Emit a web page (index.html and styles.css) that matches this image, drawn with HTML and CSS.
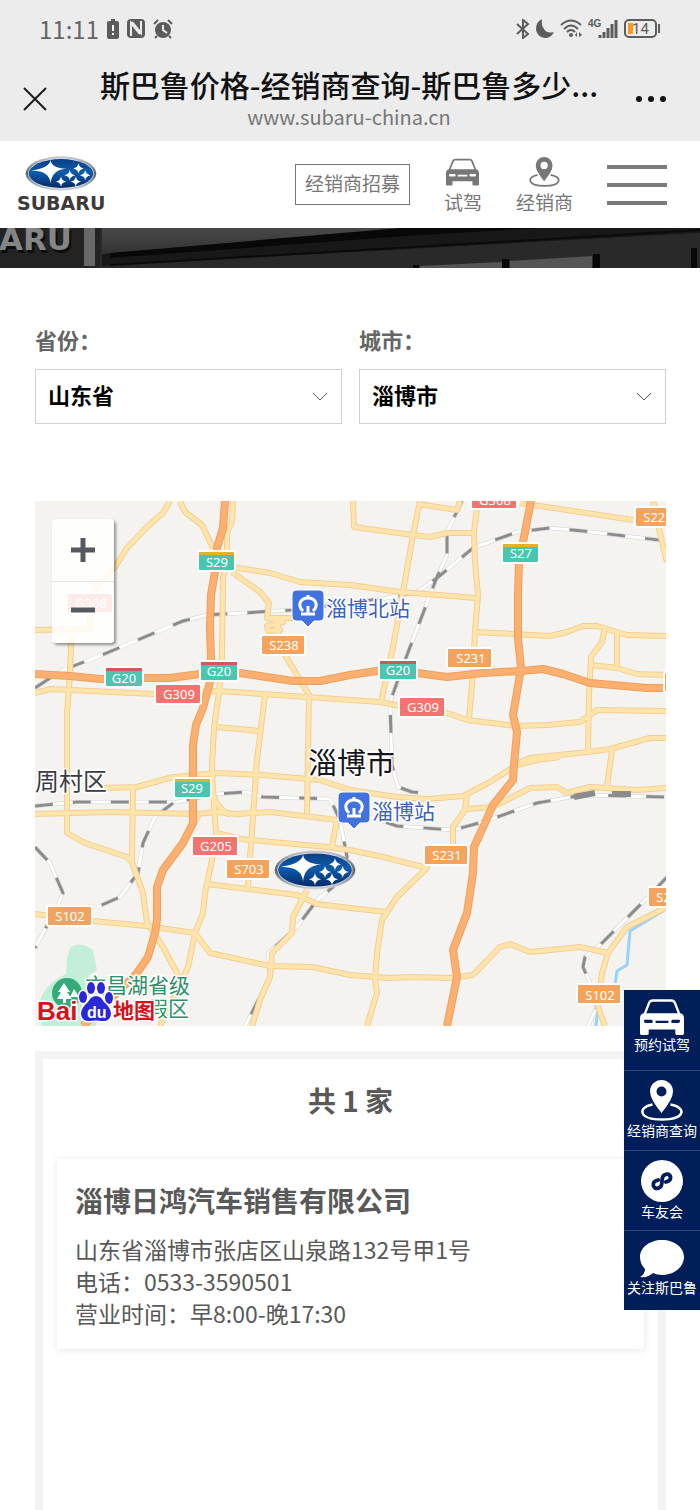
FILE: index.html
```html
<!DOCTYPE html>
<html lang="zh-CN">
<head>
  <meta charset="UTF-8">
  <title>斯巴鲁价格-经销商查询</title>
  <meta name="viewport" content="width=device-width, initial-scale=1.0">
  <link rel="stylesheet" href="styles.css">
</head>
<body>

  <!-- Shared shapes -->
  <svg class="defs" aria-hidden="true">
    <defs>
      <linearGradient id="blue" x1="0" y1="0" x2="0" y2="1">
        <stop offset="0" stop-color="#0a3f86"/>
        <stop offset="0.45" stop-color="#0d5cad"/>
        <stop offset="1" stop-color="#062a66"/>
      </linearGradient>
      <linearGradient id="silver" x1="0" y1="0" x2="0" y2="1">
        <stop offset="0" stop-color="#c9ccd0"/>
        <stop offset="0.5" stop-color="#5d6269"/>
        <stop offset="1" stop-color="#d5d8db"/>
      </linearGradient>
      <symbol id="star" viewBox="-20 -20 40 40">
        <path d="M0-20Q2-3 20 0Q2 3 0 20Q-2 3-20 0Q-2-3 0-20Z" fill="#fff"/>
      </symbol>
      <symbol id="badge" viewBox="0 0 212 104">
        <ellipse cx="106" cy="52" rx="105" ry="51" fill="url(#silver)"/>
        <ellipse cx="106" cy="52" rx="98" ry="45" fill="#dfe3e8"/>
        <ellipse cx="106" cy="52" rx="96" ry="43" fill="url(#blue)"/>
        <path d="M75 12Q77 36 122 38Q78 41 75 82Q72 42 16 44Q72 36 75 12Z" fill="#fff"/>
        <use href="#star" x="142" y="21" width="32" height="32"/>
        <use href="#star" x="116" y="41" width="32" height="32"/>
        <use href="#star" x="162" y="41" width="32" height="32"/>
        <use href="#star" x="90" y="60" width="32" height="32"/>
        <use href="#star" x="134" y="60" width="32" height="32"/>
      </symbol>
      <symbol id="car" viewBox="0 0 96 78">
        <path d="M9 36L20 8Q22 3 28 3H68Q74 3 76 8L87 36" fill="none" stroke="currentColor" stroke-width="5"/>
        <path fill-rule="evenodd" fill="currentColor" d="M0 42Q0 31 11 31H85Q96 31 96 42V75Q96 78 93 78H80Q77 78 77 75V66H19V75Q19 78 16 78H3Q0 78 0 75ZM9 45V49Q9 52 12 52H25Q29 52 28 48L26 45ZM34 47V52H62V47ZM87 45H70L68 48Q67 52 71 52H84Q87 52 87 49Z"/>
      </symbol>
      <symbol id="pin" viewBox="0 0 88 82">
        <path fill-rule="evenodd" fill="currentColor" d="M43 0A23 23 0 0 1 66 23Q66 38 43 66Q20 38 20 23A23 23 0 0 1 43 0ZM43 13A10 10 0 1 0 43 33A10 10 0 1 0 43 13Z"/>
        <path d="M25 49C-6 55-3 79 44 79S94 55 61 49" fill="none" stroke="currentColor" stroke-width="5"/>
      </symbol>
      <symbol id="station" viewBox="0 0 34 40">
        <path d="M6 1H28Q33 1 33 6V27Q33 32 28 32H23L17 38L11 32H6Q1 32 1 27V6Q1 1 6 1Z" fill="#4272dd" stroke="#fff"/>
        <path d="M12 22Q8 18 9 14Q11 9 17 9T25 14Q26 18 22 22M10 25H24M17 17V24M17 9V6" fill="none" stroke="#fff" stroke-width="3"/>
      </symbol>
    </defs>
  </svg>

  <header class="browser">
    <div class="status">
      <div class="status-side">
        <span class="clock">11:11</span>
        <svg width="12" height="20" viewBox="0 0 12 20"><path d="M4 0H8V2H10Q12 2 12 4V18Q12 20 10 20H2Q0 20 0 18V4Q0 2 2 2H4Z" fill="#5c5c5c"/><path d="M6 6V12M6 14V16" stroke="#fff" stroke-width="2"/></svg>
        <svg width="18" height="19" viewBox="0 0 18 19"><rect width="18" height="19" rx="4" fill="#5c5c5c"/><path d="M4 17V4L13 15M5 3L14 14V2" fill="none" stroke="#ececec" stroke-width="2"/></svg>
        <svg width="20" height="20" viewBox="0 0 20 20"><circle cx="10" cy="11" r="8" fill="#5c5c5c"/><path d="M1 5L5 1M15 1L19 5M4 17L2 19M16 17L18 19" stroke="#5c5c5c" stroke-width="2"/><path d="M10 6V11L14 14" fill="none" stroke="#ececec" stroke-width="2"/></svg>
      </div>
      <div class="status-side right">
        <svg width="14" height="20" viewBox="0 0 14 20"><path d="M1 5L12 15L7 19V1L12 5L1 15" fill="none" stroke="#5c5c5c" stroke-width="2"/></svg>
        <svg width="18" height="19" viewBox="0 0 18 19"><path d="M6 0Q0 3 0 10A9 9 0 0 0 9 19Q15 19 18 13Q11 15 8 10Q5 6 6 0Z" fill="#5c5c5c"/></svg>
        <svg width="22" height="19" viewBox="0 0 22 19"><path d="M1 6Q11-3 21 6M4 10Q11 3 18 10M7 13Q11 9 15 13" fill="none" stroke="#5c5c5c" stroke-width="2"/><circle cx="11" cy="16" r="2" fill="#5c5c5c"/><path d="M17 13L15 16L17 18ZM19 13L22 16L19 18Z" fill="#5c5c5c"/></svg>
        <svg width="30" height="20" viewBox="0 0 30 20"><text class="net" x="0" y="8">4G</text><path d="M12 19V16M16 19V13M20 19V9M24 19V5M28 19V1" stroke="#5c5c5c" stroke-width="3"/></svg>
        <svg width="37" height="20" viewBox="0 0 37 20"><rect x="1" y="1" width="31" height="17" rx="4" fill="none" stroke="#5c5c5c" stroke-width="2"/><path d="M4 4H9V15H4Z" fill="#f7981f"/><path d="M35 5V14" stroke="#5c5c5c" stroke-width="2"/><text class="charge" x="8" y="15">14</text></svg>
      </div>
    </div>
    <div class="titlebar">
      <button class="icon-btn" type="button" aria-label="关闭">
        <svg width="26" height="26" viewBox="0 0 26 26"><path d="M2 2L24 24M24 2L2 24" stroke="#1c1c1c" stroke-width="2"/></svg>
      </button>
      <div class="titles">
        <h1>斯巴鲁价格-经销商查询-斯巴鲁多少...</h1>
        <p>www.subaru-china.cn</p>
      </div>
      <button class="icon-btn" type="button" aria-label="更多">
        <svg width="32" height="8" viewBox="0 0 32 8"><g fill="#111"><circle cx="4" cy="4" r="3"/><circle cx="16" cy="4" r="3"/><circle cx="28" cy="4" r="3"/></g></svg>
      </button>
    </div>
  </header>

  <nav class="site-nav">
    <a class="logo" href="#">
      <svg width="72" height="35"><use href="#badge"/></svg>
      <span>SUBARU</span>
    </a>
    <a class="join" href="#">经销商招募</a>
    <a class="nav-item" href="#"><svg width="33" height="30"><use href="#car"/></svg>试驾</a>
    <a class="nav-item" href="#"><svg width="33" height="30"><use href="#pin"/></svg>经销商</a>
    <button class="menu" type="button" aria-label="菜单"><i></i><i></i><i></i></button>
  </nav>

  <div class="banner">
    <svg viewBox="0 0 700 40" preserveAspectRatio="xMinYMid slice">
      <defs>
        <linearGradient id="roof" x1="0" y1="0" x2="0" y2="1">
          <stop offset="0" stop-color="#484848"/><stop offset="1" stop-color="#333"/>
        </linearGradient>
      </defs>
      <rect width="700" height="40" fill="#2a2a2a"/>
      <rect width="100" height="40" fill="#232323"/>
      <path d="M102 26V0H450Z" fill="url(#roof)"/>
      <path d="M102 26L450 0H700V5L102 38Z" fill="#181818"/>
      <path d="M102 38L700 5V40H102Z" fill="#292929"/>
      <path d="M110 30L420 7L540 0H400L110 25Z" fill="#080808"/>
      <path d="M110 38L700 3V1L110 36Z" fill="#0b0b0b"/>
      <rect x="84" width="11" height="38" fill="#686868"/>
      <path d="M420 38L502 34V40H420ZM510 33L592 28V40H510Z" fill="#555"/>
      <path d="M413 37H419V40H413ZM502 31H509V40H502ZM593 26H600V40H593ZM691 20H697V40H691Z" fill="#080808"/>
      <text class="sign-shadow" x="1" y="25">ARU</text>
      <text class="sign" x="-1" y="22">ARU</text>
    </svg>
  </div>

  <main>
    <form class="filters">
      <div class="field">
        <label for="province">省份：</label>
        <div class="select">
          <select id="province"><option>山东省</option></select>
          <svg width="16" height="10" viewBox="0 0 16 10"><path d="M1 1L8 8L15 1" fill="none" stroke="#555"/></svg>
        </div>
      </div>
      <div class="field">
        <label for="city">城市：</label>
        <div class="select">
          <select id="city"><option>淄博市</option></select>
          <svg width="16" height="10" viewBox="0 0 16 10"><path d="M1 1L8 8L15 1" fill="none" stroke="#555"/></svg>
        </div>
      </div>
    </form>

    <div class="map">
      <svg class="map-canvas" viewBox="35 501 631 525" role="img" aria-label="淄博市地图">
        <defs>
          <g id="minor">
            <path d="M170 501L163 513L147 527L127 548L115 567L97 585L90 610L90 629L35 630M72 635L71 645L70 675L67 712L67 833L85 843L127 857L132 862L143 893L147 923L163 947L177 973L180 995"/>
            <path d="M180 501L185 512L202 525L213 548M233 501L232 522L227 532L227 562L223 578L222 658L219 692L214 728L212 765L213 793Q216 808 230 815M213 793L216 833L212 860L205 893L203 913L195 933L188 967L177 990L160 1026"/>
            <path d="M232 567L270 573L300 582L350 585L400 592L477 598M232 572L260 592L269 603L267 618L293 618M267 618L283 622L267 626L268 631L280 630L277 623L277 630L285 655L309 695L307 813"/>
            <path d="M35 693L50 689L153 694L219 691L263 694L380 702L400 706L447 713L467 720L517 726L547 725L580 722L597 710L667 711M265 695L257 760L248 887M217 727L260 731"/>
            <path d="M353 501L354 527L413 535L430 537L447 533L474 533M420 501L413 535L403 592L392 652L381 702M418 504L457 510L460 501M478 501L474 532L475 562L478 595L475 632L473 672L469 719"/>
            <path d="M520 503L633 520M653 501L662 542L667 562M475 632L550 636L567 632L583 626L597 626L627 635L667 636M605 628L602 642L591 657L589 695L588 752M617 633V668M592 665L617 668L637 674L667 675"/>
            <path d="M514 765L530 758L588 752L610 749L650 738L667 738M612 750L607 787M35 814L110 812L197 814L217 812L237 814L270 812L337 820L332 846M200 812L193 826"/>
            <path d="M103 788L137 787L173 777L217 773L263 775L320 780L350 790L397 797L427 799L463 796L490 782L517 765L537 760L560 757M133 788L132 860M217 833L240 839L327 847L350 850L383 857L427 868L397 897L382 920L377 953L375 980L377 993L367 1026"/>
            <path d="M207 884L297 895L317 904L350 908L387 912M35 914L93 921L147 926L195 933L210 953L270 966L313 967L350 975L390 978L410 977L450 978L473 975L500 947L510 944L530 952L580 947L608 953M307 890L293 917L292 933L272 953L270 977L260 1000L252 1026"/>
            <path d="M467 795L465 810L453 827L453 847M467 809L493 807L530 788L557 787L567 793L590 787L637 790L667 788M667 907L627 927L608 953L602 973L598 1007L605 1026"/>
          </g>
          <g id="rails">
            <path d="M35 688L47 680L63 670L97 657L183 621L207 615L293 610L387 598L417 592L437 578L473 548L517 532L550 528L583 531L667 541"/>
            <path d="M462 501L447 532L447 555L437 577L407 655L390 702L392 765L398 787L412 792L422 793"/>
            <path d="M35 806L77 802L177 802L217 794L247 792L263 797L330 799L340 820L347 857L333 887L317 900L297 927L268 953L270 977L245 1026"/>
            <path d="M173 803L155 817L143 843L138 873L120 897L97 907M35 847L50 863L63 893L57 907L35 948"/>
            <path d="M350 810L370 817L397 826L453 830L483 822L537 803L583 795L667 797M667 877L647 898L600 945L585 957L583 967L590 983L597 1007L588 1026"/>
          </g>
          <g id="major">
            <path d="M225 501L223 528L217 548L215 572L211 595L210 628L211 658L210 682L203 708L196 725L193 745L193 823L183 843L163 870L157 887L157 920L155 933L148 957L137 973L127 983L83 1026"/>
            <path d="M35 674L70 676L100 679L143 678L170 678L200 674L240 673L293 681L320 681L350 675L377 671L417 673L447 677L483 673L521 671L543 669L563 674L590 683L647 688L667 688"/>
            <path d="M531 501L525 532L519 562L518 595L518 638L521 668L517 692L513 715L517 732L514 765L513 780L493 805L485 823L474 847L473 873L467 913L453 950L457 977L447 1026"/>
          </g>
        </defs>
        <rect x="35" y="501" width="631" height="525" fill="#f4f3f0"/>
        <path d="M70 948Q80 940 93 950L97 970L88 976L102 990L96 1026H42L38 1008Q42 985 66 974L67 958Z" fill="#c3efd8"/>
        <path d="M666 909L630 931L627 965L617 971L615 985L598 1006L596 1026" class="river"/>
        <use href="#rails" class="rail-edge"/>
        <use href="#rails" class="rail-gap"/>
        <use href="#rails" class="rail-dash"/>
        <use href="#minor" class="minor-edge"/>
        <use href="#minor" class="minor-fill"/>
        <path d="M574 797L595 793M612 794H631" class="rail-yard"/>
        <use href="#major" class="major-edge"/>
        <use href="#major" class="major-fill"/>

        <!-- Road shields -->
        <g class="shield teal">
          <rect x="198" y="551" width="37" height="20" rx="2"/><rect x="105" y="667" width="38" height="20" rx="2"/>
          <rect x="200" y="661" width="38" height="20" rx="2"/><rect x="502" y="543" width="37" height="20" rx="2"/>
          <rect x="379" y="660" width="38" height="20" rx="2"/><rect x="174" y="778" width="37" height="20" rx="2"/>
        </g>
        <path d="M199 552H234V555H199ZM503 544H538V547H503ZM175 779H210V782H175Z" fill="#e2b22e"/>
        <path d="M106 668H142V671H106ZM201 662H237V665H201ZM380 661H416V664H380Z" fill="#d2565c"/>
        <g class="shield red">
          <rect x="155" y="684" width="46" height="20" rx="2"/><rect x="399" y="697" width="46" height="20" rx="2"/>
          <rect x="471" y="489" width="46" height="20" rx="2"/><rect x="192" y="836" width="46" height="20" rx="2"/>
          <rect x="67" y="593" width="46" height="20" rx="2"/>
        </g>
        <g class="shield orange">
          <rect x="261" y="635" width="44" height="20" rx="2"/><rect x="447" y="648" width="45" height="20" rx="2"/>
          <rect x="635" y="507" width="44" height="20" rx="2"/><rect x="226" y="859" width="44" height="20" rx="2"/>
          <rect x="47" y="906" width="45" height="20" rx="2"/><rect x="424" y="845" width="44" height="20" rx="2"/>
          <rect x="577" y="984" width="44" height="20" rx="2"/><rect x="648" y="887" width="44" height="20" rx="2"/>
          <rect x="664" y="672" width="44" height="20" rx="2"/>
        </g>
        <g class="shield-text">
          <text x="217" y="567">S29</text><text x="124" y="683">G20</text><text x="219" y="676">G20</text>
          <text x="521" y="558">S27</text><text x="398" y="675">G20</text><text x="192" y="793">S29</text>
          <text x="179" y="699">G309</text><text x="423" y="712">G309</text><text x="495" y="505">G308</text>
          <text x="216" y="851">G205</text><text x="91" y="608">G308</text><text x="284" y="650">S238</text>
          <text x="471" y="663">S231</text><text x="658" y="522">S221</text><text x="249" y="874">S703</text>
          <text x="70" y="921">S102</text><text x="447" y="860">S231</text><text x="600" y="1000">S102</text>
          <text x="671" y="902">S231</text>
        </g>

        <use href="#station" x="291" y="589" width="34" height="40"/>
        <use href="#station" x="337" y="791" width="34" height="40"/>
        <text class="place station-name" x="326" y="616">淄博北站</text>
        <text class="place station-name" x="372" y="819">淄博站</text>
        <text class="place city" x="308" y="774">淄博市</text>
        <text class="place district" x="35" y="790">周村区</text>
        <text class="place park" x="85" y="993">文昌湖省级</text>
        <text class="place park" x="147" y="1016">假区</text>
        <circle cx="67" cy="993" r="15" fill="#35ab79"/>
        <path d="M64 983L70 992H67L72 999H66V1003H63V999H57L61 992H58ZM74 989L79 997H70Z" fill="#fff"/>
        <use href="#badge" x="274" y="850" width="82" height="40"/>

        <!-- Baidu logo -->
        <g class="baidu">
          <text class="bai" x="37" y="1020">Bai</text>
          <g class="paw">
            <ellipse cx="83" cy="997" rx="4" ry="6"/><ellipse cx="91" cy="988" rx="4" ry="6"/>
            <ellipse cx="101" cy="988" rx="4" ry="6"/><ellipse cx="109" cy="998" rx="4" ry="6"/>
            <path d="M96 996Q101 996 104 1002Q111 1008 111 1014Q110 1022 102 1021Q96 1020 90 1021Q82 1022 81 1014Q81 1008 88 1002Q91 996 96 996Z"/>
          </g>
          <text class="du" x="87" y="1018">du</text>
          <text class="ditu" x="113" y="1018">地图</text>
        </g>
      </svg>
      <div class="zoom">
        <button type="button" aria-label="放大"><svg width="26" height="26" viewBox="0 0 26 26"><path d="M1 13H25M13 1V25" stroke="#55585c" stroke-width="5"/></svg></button>
        <button type="button" aria-label="缩小"><svg width="26" height="26" viewBox="0 0 26 26"><path d="M1 10H25" stroke="#55585c" stroke-width="5"/></svg></button>
      </div>
    </div>

    <section class="dealers">
      <h2>共 1 家</h2>
      <article class="dealer">
        <h3>淄博日鸿汽车销售有限公司</h3>
        <p>山东省淄博市张店区山泉路132号甲1号</p>
        <p>电话：0533-3590501</p>
        <p>营业时间：早8:00-晚17:30</p>
      </article>
    </section>
  </main>

  <aside class="side">
    <a href="#"><svg width="44" height="36"><use href="#car"/></svg>预约试驾</a>
    <a href="#"><svg width="44" height="41"><use href="#pin"/></svg>经销商查询</a>
    <a href="#"><svg width="44" height="42" viewBox="0 0 44 44"><circle cx="22" cy="22" r="22" fill="#fff"/><path d="M18 21Q12 22 13 27Q15 31 19 29Q22 28 22 22T26 15Q30 14 31 18Q31 22 26 23" fill="none" stroke="#001e5a" stroke-width="4" stroke-linecap="round"/></svg>车友会</a>
    <a href="#"><svg width="44" height="38" viewBox="0 0 44 38"><path d="M22 0C35 0 44 8 44 17S35 35 22 35Q17 35 13 33Q8 38 0 37Q5 34 5 29Q0 24 0 17C0 8 9 0 22 0Z" fill="#fff"/></svg>关注斯巴鲁</a>
  </aside>

</body>
</html>
```
FILE: styles.css
```css
* {
  box-sizing: border-box;
}

body {
  margin: 0;
  min-height: 100vh;
  display: flex;
  flex-direction: column;
  background: #fff;
  color: #595959;
  font-family: "Noto Sans CJK SC", sans-serif;
}

h1, h2, h3, p {
  margin: 0;
}

a {
  color: inherit;
  text-decoration: none;
}

button {
  padding: 0;
  border: none;
  background: none;
  cursor: pointer;
}

svg {
  display: block;
  flex: none;
}

.defs {
  position: absolute;
  width: 0;
  height: 0;
}

/* Phone and browser bars */
.browser {
  background: #ececec;
}

.status {
  display: flex;
  justify-content: space-between;
  align-items: center;
  height: 57px;
  padding: 0 39px;
}

.status-side {
  display: flex;
  align-items: center;
  gap: 8px;
}

.status-side.right {
  gap: 6px;
}

.clock {
  font-size: 24px;
  line-height: 28px;
  color: #666;
}

.net {
  font: bold 10px "Liberation Sans", sans-serif;
  fill: #5c5c5c;
}

.charge {
  font: 15px Roboto, sans-serif;
  fill: #5c5c5c;
}

.titlebar {
  display: flex;
  align-items: center;
  height: 84px;
  padding: 0 33px 0 22px;
}

.titles {
  flex: 1;
  padding: 0 0 4px 15px;
  text-align: center;
  white-space: nowrap;
}

.titles h1 {
  font-size: 30px;
  font-weight: 500;
  line-height: 40px;
  color: #111;
}

.titles p {
  font-size: 20px;
  line-height: 26px;
  color: #777;
}

/* Site header */
.site-nav {
  display: flex;
  align-items: center;
  gap: 34px;
  height: 87px;
  padding: 0 33px 0 17px;
  font-size: 19px;
  line-height: 24px;
  color: #777;
}

.logo {
  display: flex;
  flex-direction: column;
  align-items: center;
  gap: 2px;
  margin-right: auto;
}

.logo span {
  font: bold 19px/20px "DejaVu Sans", sans-serif;
  color: #3c3a3b;
}

.join {
  padding: 6px 9px 9px;
  border: 1px solid #777;
}

.nav-item {
  display: flex;
  flex-direction: column;
  align-items: center;
  gap: 3px;
  padding-top: 2px;
}

.menu {
  display: flex;
  flex-direction: column;
  gap: 14px;
}

.menu i {
  width: 60px;
  height: 4px;
  background: #7a7a7a;
}

.banner {
  height: 40px;
  overflow: hidden;
}

.banner svg {
  width: 100%;
  height: 40px;
}

.sign,
.sign-shadow {
  font: bold 31px "DejaVu Sans", sans-serif;
  fill: #858585;
}

.sign-shadow {
  fill: #0c0c0c;
}

main {
  flex: 1;
  display: flex;
  flex-direction: column;
  padding: 56px 34px 0 35px;
}

/* Province and city */
.filters {
  display: flex;
  gap: 17px;
  margin-bottom: 77px;
}

.field {
  flex: 1;
}

.field label {
  display: block;
  padding-bottom: 15px;
  font-size: 22px;
  font-weight: bold;
  line-height: 30px;
  color: #666;
}

.select {
  display: grid;
  align-items: center;
}

.select select,
.select svg {
  grid-area: 1 / 1;
}

.select svg {
  justify-self: end;
  margin-right: 14px;
  pointer-events: none;
}

select {
  width: 100%;
  height: 55px;
  padding: 0 12px 5px;
  border: 1px solid #ccd1d8;
  border-radius: 0;
  background: #fff;
  appearance: none;
  font-family: inherit;
  font-size: 22px;
  font-weight: bold;
  color: #000;
}

/* Map */
.map {
  position: relative;
  margin-bottom: 25px;
}

.map-canvas {
  width: 100%;
  height: auto;
}

.map-canvas use,
.river {
  stroke-linejoin: round;
}

.river {
  fill: none;
  stroke: #9bd3f7;
  stroke-width: 3;
}

.rail-edge,
.rail-gap,
.rail-dash,
.minor-edge,
.minor-fill,
.major-edge,
.major-fill {
  fill: none;
}

.rail-edge {
  stroke: #cfcfcf;
  stroke-width: 4;
}

.rail-gap {
  stroke: #fff;
  stroke-width: 3;
}

.rail-dash {
  stroke: #8c8c8c;
  stroke-width: 3;
  stroke-dasharray: 18 20;
}

.rail-yard {
  fill: none;
  stroke: #8c8c8c;
  stroke-width: 6;
}

.minor-edge {
  stroke: #f3cd92;
  stroke-width: 6;
}

.minor-fill {
  stroke: #ffe5ab;
  stroke-width: 4;
}

.major-edge {
  stroke: #ee9f60;
  stroke-width: 8;
}

.major-fill {
  stroke: #fcb06f;
  stroke-width: 6;
}

.shield {
  stroke: #fff;
  stroke-width: 2;
}

.teal { fill: #4ac6b0; }
.red { fill: #f5736e; }
.orange { fill: #f5a35c; }

.shield-text {
  font: 13px "Noto Sans", sans-serif;
  fill: #fff;
  text-anchor: middle;
}

.place {
  paint-order: stroke;
  stroke: #fff;
  stroke-width: 3;
  stroke-linejoin: round;
}

.station-name {
  font-size: 21px;
  fill: #3d63b8;
}

.city {
  font-size: 29px;
  fill: #15151c;
}

.district {
  font-size: 24px;
  fill: #3a3b48;
}

.park {
  font-size: 21px;
  fill: #2b9065;
}

.baidu {
  paint-order: stroke;
  stroke: #fff;
  stroke-width: 3;
  stroke-linejoin: round;
  font-weight: bold;
}

.bai {
  font: bold 26px "Liberation Sans", sans-serif;
  fill: #d8121a;
}

.paw {
  fill: #2a28d8;
}

.du {
  font: bold 16px "Liberation Sans", sans-serif;
  fill: #fff;
  stroke: none;
}

.ditu {
  font-size: 21px;
  fill: #d8121a;
}

.zoom {
  position: absolute;
  top: 18px;
  left: 17px;
  display: flex;
  flex-direction: column;
  width: 62px;
  border-radius: 4px;
  background: rgba(255, 255, 255, 0.85);
  box-shadow: 2px 2px 3px rgba(0, 0, 0, 0.4);
}

.zoom button {
  display: flex;
  justify-content: center;
  align-items: center;
  height: 62px;
}

.zoom button + button {
  border-top: 1px solid #e8e4e0;
}

/* Dealer list */
.dealers {
  flex: 1;
  padding: 21px 14px 0;
  border: 8px solid #f3f3f3;
  border-bottom: none;
}

.dealers h2 {
  margin-bottom: 39px;
  font-size: 28px;
  line-height: 40px;
  text-align: center;
}

.dealer {
  padding: 21px 18px 20px;
  background: #fff;
  box-shadow: 0 1px 8px rgba(0, 0, 0, 0.1);
}

.dealer h3 {
  margin-bottom: 13px;
  font-size: 28px;
  line-height: 40px;
}

.dealer p {
  font-size: 23px;
  line-height: 32px;
}

/* Floating shortcuts */
.side {
  position: fixed;
  right: 0;
  bottom: 200px;
  width: 76px;
  background: #001e5a;
}

.side a {
  display: flex;
  flex-direction: column;
  align-items: center;
  height: 80px;
  padding-top: 9px;
  color: #fff;
  font-size: 14px;
  line-height: 18px;
  white-space: nowrap;
}

.side a + a {
  border-top: 1px solid #2f4876;
}
```
